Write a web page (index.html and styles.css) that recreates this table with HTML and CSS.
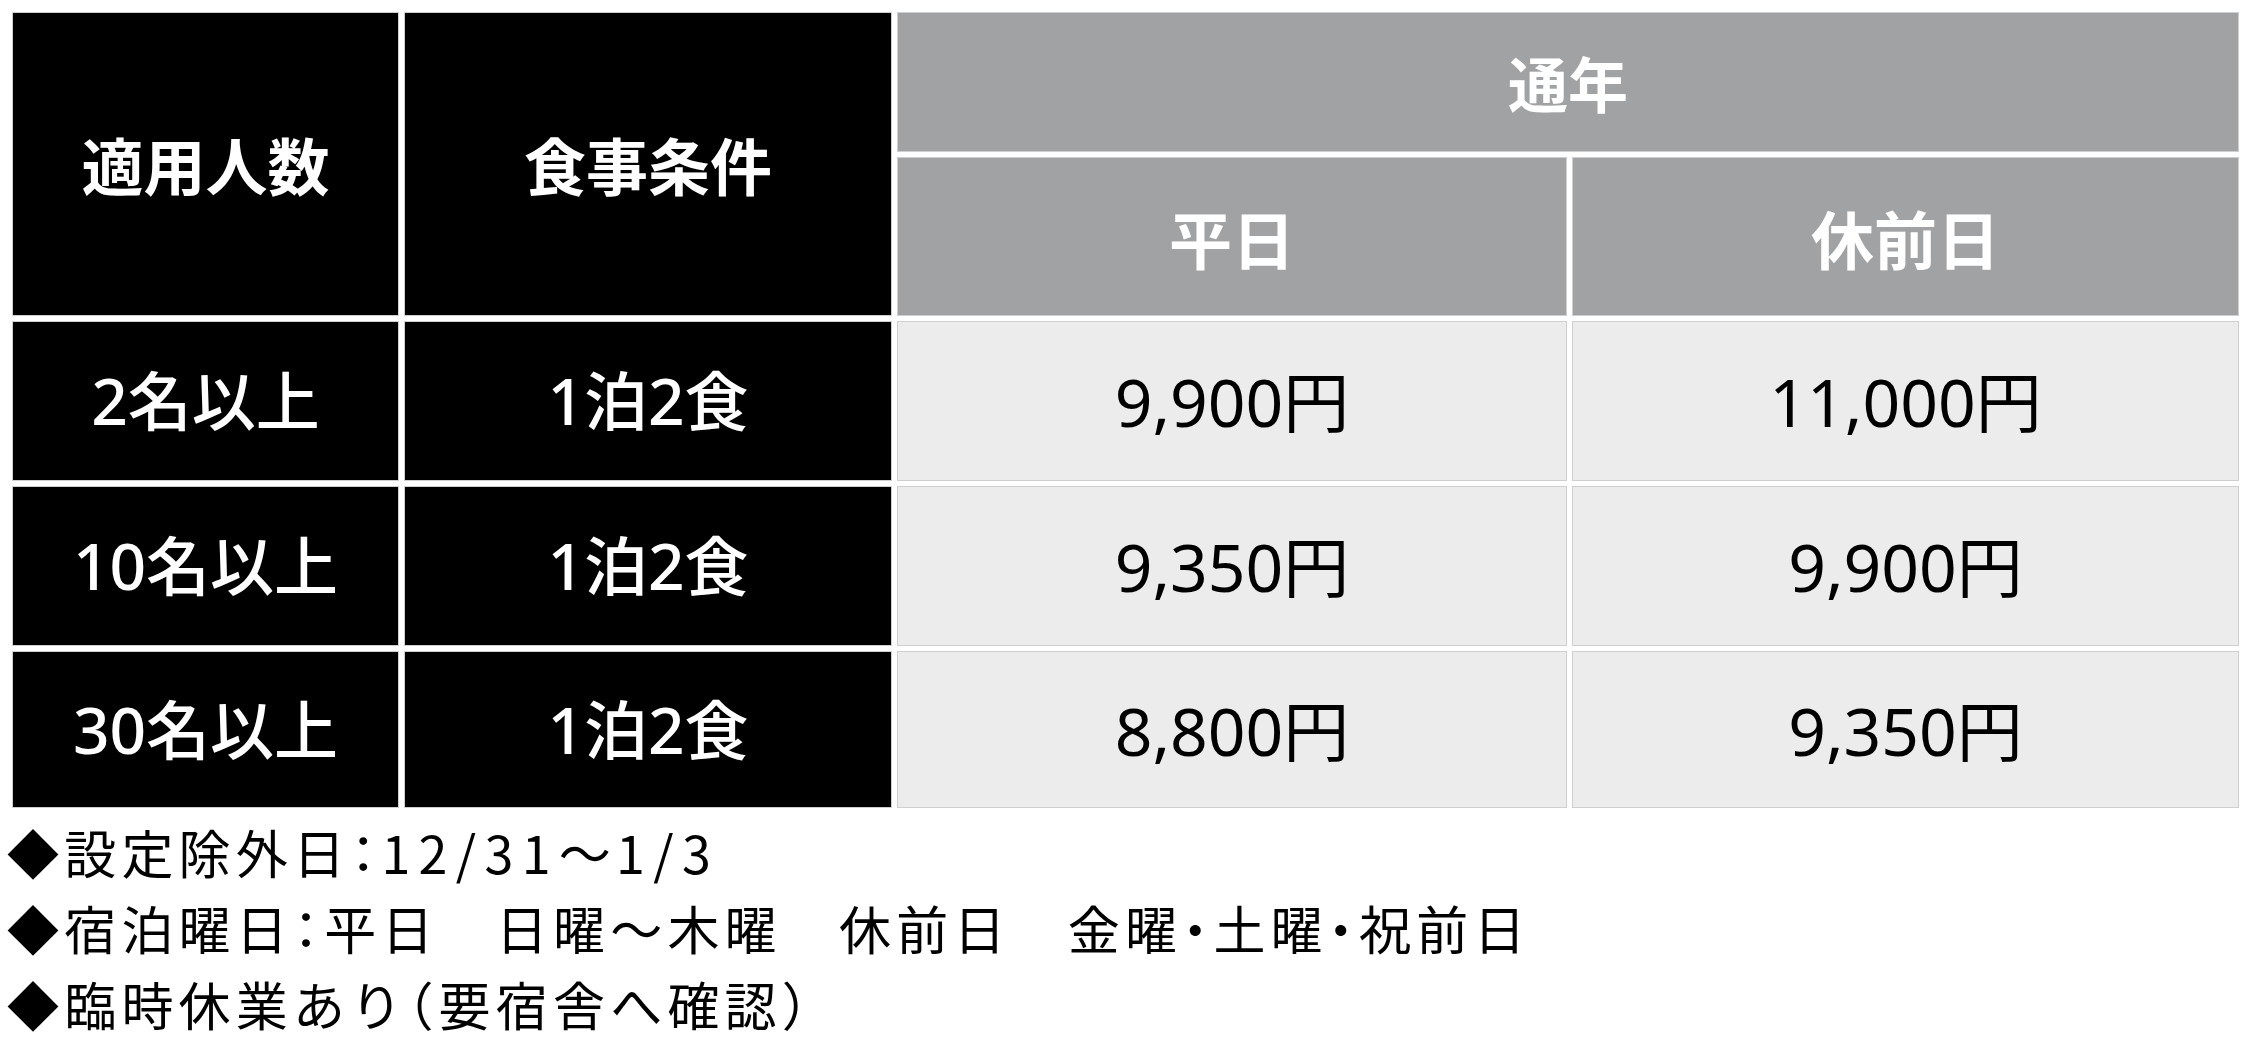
FILE: index.html
```html
<!DOCTYPE html>
<html lang="ja">
<head>
<meta charset="utf-8">
<title>料金表</title>
<link rel="stylesheet" href="styles.css">
</head>
<body>
<div class="page">
  <div class="rate-table">
    <div class="cell head-dark span-rows">適用人数</div>
    <div class="cell head-dark span-rows">食事条件</div>
    <div class="cell head-gray head-top span-cols">通年</div>
    <div class="cell head-gray">平日</div>
    <div class="cell head-gray">休前日</div>

    <div class="cell label">2名以上</div>
    <div class="cell label">1泊2食</div>
    <div class="cell price">9,900円</div>
    <div class="cell price">11,000円</div>

    <div class="cell label">10名以上</div>
    <div class="cell label">1泊2食</div>
    <div class="cell price">9,350円</div>
    <div class="cell price">9,900円</div>

    <div class="cell label">30名以上</div>
    <div class="cell label">1泊2食</div>
    <div class="cell price">8,800円</div>
    <div class="cell price">9,350円</div>
  </div>
  <ul class="notes">
    <li>◆設定除外日：<span class="num">12/31</span>〜<span class="num">1/3</span></li>
    <li>◆宿泊曜日：平日　日曜〜木曜　休前日　金曜・土曜・祝前日</li>
    <li>◆臨時休業あり（要宿舎へ確認）</li>
  </ul>
</div>
</body>
</html>
```

FILE: styles.css
```css
html, body {
  margin: 0;
  padding: 0;
  background: #ffffff;
}

.page {
  padding: 12px 0 0 7px;
  font-family: "Noto Sans CJK JP", "Noto Sans", sans-serif;
}

.rate-table {
  margin-left: 5px;
  display: grid;
  grid-template-columns: 387px 488px 670px 667px;
  grid-template-rows: 140px 159px 160px 160px 157px;
  gap: 5px;
}

.cell {
  box-sizing: border-box;
  border: 1px solid #cfcfcf;
  display: flex;
  align-items: center;
  justify-content: center;
  line-height: 1;
}

.span-rows {
  grid-row: span 2;
}

.span-cols {
  grid-column: span 2;
}

.head-dark {
  background: #000000;
  color: #ffffff;
  font-weight: 700;
  font-size: 62px;
}

.head-gray {
  background: #a1a2a4;
  color: #ffffff;
  font-weight: 700;
  font-size: 63px;
}

.head-top {
  font-size: 60px;
}

.label {
  background: #000000;
  color: #ffffff;
  font-family: "Noto Sans", "Noto Sans CJK JP", sans-serif;
  font-size: 64px;
  font-weight: 500;
}

.price {
  background: #ececec;
  color: #000000;
  font-family: "Noto Sans", "Noto Sans CJK JP", sans-serif;
  font-size: 66px;
  font-weight: 400;
}

.notes {
  list-style: none;
  margin: 6px 0 0 0;
  padding: 0;
  font-size: 52px;
  line-height: 76px;
  letter-spacing: 0.1em;
  color: #000000;
  font-feature-settings: "halt" 1;
}

.num {
  letter-spacing: 0.16em;
}
```
